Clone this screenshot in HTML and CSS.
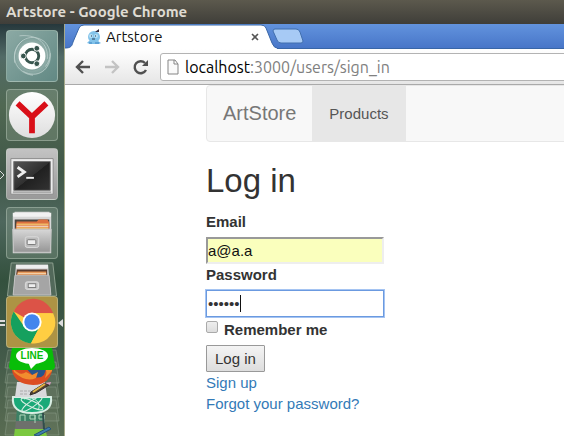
FILE: index.html
```html
<!DOCTYPE html>
<html lang="en">
<head>
<meta charset="utf-8">
<title>Artstore</title>
<link rel="stylesheet" href="styles.css">
</head>
<body>
<div class="desktop">
  <header class="titlebar">Artstore - Google Chrome</header>
  <div class="workspace">
    <nav class="launcher" aria-label="Launcher">
      <button class="tile tile-dash" aria-label="Dash">
        <svg viewBox="0 0 52 52">
          <defs><radialGradient id="dash"><stop offset="0" stop-color="#c5d4d1"/><stop offset="1" stop-color="#7b9d98"/></radialGradient></defs>
          <circle cx="26" cy="26" r="20" fill="url(#dash)"/>
          <g fill="none" stroke="#c0d2cf" stroke-width="1" opacity=".75">
            <path d="M8 33C5 11 24 0 39 11C46 18 47 28 40 37M16 10C0 24 9 44 27 46M45 23C46 41 31 50 17 42M13 5C33 3 43 14 42 29"/>
          </g>
          <circle cx="26" cy="27" r="14" fill="#60817c" opacity=".4"/>
          <circle cx="26" cy="26" r="14" fill="#fff"/>
          <circle cx="26" cy="26" r="7" fill="none" stroke="#38554e" stroke-width="3"/>
          <g fill="#38554e" stroke="#fff" stroke-width="1"><circle cx="17" cy="26" r="3"/><circle cx="31" cy="18" r="3"/><circle cx="31" cy="34" r="3"/></g>
        </svg>
      </button>
      <button class="tile" aria-label="Yandex">
        <svg viewBox="0 0 52 52">
          <defs><linearGradient id="disc" x2="0" y2="1"><stop stop-color="#fff"/><stop offset="1" stop-color="#dedede"/></linearGradient></defs>
          <circle cx="26" cy="26" r="24" fill="url(#disc)"/>
          <path d="M11 14L26 28V45M26 28L41 14" fill="none" stroke="#d90f18" stroke-width="6"/>
        </svg>
      </button>
      <button class="tile tile-terminal" aria-label="Terminal">
        <svg viewBox="0 0 52 52">
          <defs><linearGradient id="term" x2="1" y2="1"><stop stop-color="#555"/><stop offset=".5" stop-color="#303030"/><stop offset=".51" stop-color="#202020"/><stop offset="1" stop-color="#333"/></linearGradient></defs>
          <path d="M4 10H48V47H4z" fill="#ededed" stroke="#888"/>
          <path d="M6 44H46V46H6z" fill="#aaa"/>
          <path d="M7 13H45V43H7z" fill="url(#term)" stroke="#777"/>
          <path d="M11 19L18 24L11 29" fill="none" stroke="#eee" stroke-width="3"/>
          <path d="M20 30H28" stroke="#eee" stroke-width="2"/>
        </svg>
        <svg class="mark mark-left" viewBox="0 0 5 8"><path d="M0 0L4 4L0 8" fill="none" stroke="#ddd"/></svg>
      </button>
      <button class="tile" aria-label="Files">
        <svg viewBox="0 0 52 52">
          <defs><linearGradient id="metal" x2="0" y2="1"><stop stop-color="#d8d8d8"/><stop offset="1" stop-color="#959595"/></linearGradient></defs>
          <path d="M8 4H44L46 10V47H6V10z" fill="#d8d8d8"/>
          <path d="M6 5H46V9H6z" fill="#f2f2f2"/>
          <path d="M8 12H44V23H8z" fill="#4a4540"/>
          <path d="M10 14H31L33 12H42L44 15V22H9z" fill="#dc703f"/>
          <path d="M10 17H43M10 21H43" stroke="#efba69" stroke-width="2"/><path d="M10 19H43" stroke="#f7eee4"/>
          <path d="M6 22H46L45 46H7z" fill="url(#metal)" stroke="#c4c4c4"/>
          <rect x="19" y="30" width="14" height="11" rx="2" fill="#bcbcbc" stroke="#ddd"/><rect x="21" y="33" width="9" height="5" rx="1" fill="#eee" stroke="#777"/>
        </svg>
      </button>
      <button class="tile-folded" aria-label="Files window">
        <svg viewBox="0 0 52 36">
          <path d="M4 1H48L52 36H0z" fill="#52695a" stroke="#8ea190"/>
          <path d="M9 3H43L46 35H6z" fill="#c9c9c9"/><path d="M9 3H43V7H9z" fill="#eee"/>
          <path d="M10 8H42V15H9z" fill="#5a3b2d"/><path d="M11 10H41V14H10z" fill="#e6904d"/><path d="M11 12H41" stroke="#f7dfbc"/>
          <path d="M8 14H44L46 35H6z" fill="#a5a5a5" stroke="#c4c4c4"/>
          <rect x="19" y="21" width="14" height="8" rx="2" fill="#c8c8c8" stroke="#ddd"/><rect x="22" y="23" width="8" height="4" fill="#eee" stroke="#777"/>
        </svg>
      </button>
      <button class="tile tile-chrome" aria-label="Google Chrome">
        <svg viewBox="0 0 52 52">
          <circle cx="26" cy="26" r="22" fill="#ffce42"/>
          <path d="M26 26L7 15A22 22 0 0 1 48 17H26z" fill="#dc5347"/>
          <path d="M7 15A22 22 0 0 0 25 48L34 31L26 26L18 31z" fill="#15a05e"/>
          <path d="M26 17H48A22 22 0 0 1 25 48L34 31z" fill="#ffce42"/>
          <circle cx="26" cy="26" r="10" fill="#fff"/><circle cx="26" cy="26" r="8" fill="#4285ed"/>
        </svg>
        <svg class="mark mark-left" viewBox="0 0 5 8"><path d="M0 2H5M0 6H5" stroke="#ddd" stroke-width="2"/></svg>
        <svg class="mark mark-right" viewBox="0 0 5 8"><path d="M5 0V8L0 4z" fill="#ddd"/></svg>
      </button>
      <button class="stack" aria-label="More applications">
        <svg viewBox="0 0 64 88">
          <g fill="#a3b4a1" fill-opacity=".1" stroke="#a3b4a1" stroke-opacity=".35">
            <path d="M8 2H56L59 20H5z"/><path d="M8 14H56L59 35H5z"/><path d="M8 26H56L59 49H5z"/><path d="M8 39H56L59 60H5z"/><path d="M8 52H56L59 73H5z"/><path d="M8 65H56L59 87H5z"/>
          </g>
          <path d="M15 80H45L47 88H14z" fill="#7bc83f"/>
          <path d="M16 72H43L46 81H15z" fill="#6d706c"/>
          <path d="M17 60H42L44 73H16z" fill="#3c8065"/>
          <path d="M21 73V67H26V73M31 67H36V71H31V67M36 67V75M40 67H45V71H40V67M45 67V75" transform="translate(-1)" fill="none" stroke="#afd7bb"/>
          <path d="M13 49H51Q53 65 32 65Q11 65 13 49z" fill="#1aa978" stroke="#d9eee4" stroke-width="2"/>
          <g fill="none" stroke="#d9eee4"><ellipse cx="32" cy="56" rx="12" ry="3" transform="rotate(25 32 56)"/><ellipse cx="32" cy="56" rx="12" ry="3" transform="rotate(-35 32 56)"/><path d="M24 51C35 47 42 56 38 62"/></g>
          <path d="M17 34H45L47 49H15z" fill="#d9d9dc"/>
          <path d="M20 43H33M20 46H28" stroke="#aaa" stroke-dasharray="3 1"/>
          <path d="M12 16H53Q52 37 33 37Q14 36 12 22z" fill="#dc4d22"/>
          <path d="M24 18H46Q46 32 34 29z" fill="#28558c"/>
          <path d="M13 20Q20 29 26 24L32 27L38 24L36 30Q26 35 14 24zM44 20Q48 22 45 30L52 23V17z" fill="#f18d2e"/>
          <path d="M31 44L45 35L49 37L36 45L30 47z" fill="#534231" stroke="#342d29"/><path d="M33 44L45 36" stroke="#e0b444" stroke-width="2"/><path d="M45 35L51 34L50 37z" fill="#d99cc2"/>
          <path d="M12 0H52L55 18Q55 22 51 22H13Q9 22 9 18z" fill="#08bd08"/>
          <ellipse cx="32" cy="8" rx="16" ry="8" fill="#fff"/><path d="M28 14H38L31 21z" fill="#fff"/>
          <text x="32" y="11" text-anchor="middle" class="line-logo">LINE</text>
          <path d="M43 65L44 81" stroke="#304d4b" stroke-width="2"/>
          <path d="M34 87L49 79L51 81L38 88z" fill="#407dad" stroke="#255276"/>
        </svg>
      </button>
    </nav>
    <div class="browser">
      <div class="tabs">
        <div class="tab">
          <svg class="tab-shape" viewBox="0 0 212 25"><path d="M0 25V24C6 24 7 22 8 18L14 4Q15 1 19 1H196Q200 1 201 4L207 19Q209 24 212 24V25z" fill="#fff"/><path d="M0 24C6 24 7 22 8 18L14 4Q15 1 19 1H196Q200 1 201 4L207 19Q209 24 212 24" fill="none" stroke="#3966a7"/></svg>
          <svg class="favicon" viewBox="0 0 16 16"><path d="M3 12L1 14L4 15H13L15 14L12 12" fill="#79bde9"/><circle cx="8" cy="8" r="6" fill="#83c3ea"/><circle cx="5" cy="7" r="2" fill="#b8def4"/><circle cx="10" cy="7" r="2" fill="#b8def4"/><path d="M5 7H6M9 7H10M6 10H9" stroke="#243d57"/><path d="M9 3L13 0V3z" fill="#342a3d"/><path d="M3 14H6M9 14H13" stroke="#4387c1"/></svg>
          <span class="tab-title">Artstore</span>
          <button class="tab-close" aria-label="Close tab"><svg viewBox="0 0 8 8"><path d="M1 1L7 7M7 1L1 7" stroke="#555" stroke-width="1.6"/></svg></button>
        </div>
        <button class="new-tab" aria-label="New tab"><svg viewBox="0 0 32 16"><path d="M3 1H24Q27 1 28 4L31 13Q31 15 29 15H9Q6 15 5 12L1 3Q1 1 3 1z" fill="#a7caf5" stroke="#416fae"/></svg></button>
      </div>
      <div class="toolbar">
        <button class="tool" aria-label="Back"><svg viewBox="0 0 16 16"><path d="M15 8H3M8 2L2 8L8 14" fill="none" stroke="#505050" stroke-width="2.4"/></svg></button>
        <button class="tool" aria-label="Forward"><svg viewBox="0 0 16 16"><path d="M1 8H13M8 2L14 8L8 14" fill="none" stroke="#c3c3c3" stroke-width="2.4"/></svg></button>
        <button class="tool" aria-label="Reload"><svg viewBox="0 0 16 16"><path d="M12 4A6 6 0 1 0 13 11" fill="none" stroke="#505050" stroke-width="2.4"/><path d="M15 1V7H9z" fill="#505050"/></svg></button>
        <div class="address">
          <svg class="page-icon" viewBox="0 0 12 16"><path d="M1 1H8L11 5V15H1zM7 1V5H11" fill="#fafafa" stroke="#858585"/></svg>
          <span class="url"><span class="host">localhost</span>:3000/users/sign_in</span>
        </div>
      </div>
      <main class="page">
        <nav class="navbar">
          <a class="brand" href="#">ArtStore</a>
          <a class="nav-item" href="#">Products</a>
        </nav>
        <h1>Log in</h1>
        <form>
          <div class="field">
            <label for="email">Email</label>
            <input class="text email" id="email" type="email" value="a@a.a">
          </div>
          <div class="field">
            <label for="password">Password</label>
            <div class="password-box">
              <input class="text password" id="password" type="password" value="aaaaaa">
              <span class="caret"></span>
            </div>
          </div>
          <div class="remember">
            <input id="remember" type="checkbox">
            <label for="remember">Remember me</label>
          </div>
          <button class="submit" type="button">Log in</button>
        </form>
        <a class="link" href="#">Sign up</a>
        <a class="link" href="#">Forgot your password?</a>
      </main>
    </div>
  </div>
</div>
</body>
</html>
```
FILE: styles.css
```css
* { box-sizing: border-box; }
body { margin: 0; }
button { margin: 0; padding: 0; border: 0; background: none; }
svg { display: block; }

.desktop {
  display: flex;
  flex-direction: column;
  height: 100vh;
  overflow: hidden;
  background: #fff;
}
.titlebar {
  flex: none;
  height: 24px;
  padding-left: 6px;
  background: linear-gradient(#5c594d, #3f3e39);
  color: #dfdbd2;
  font: bold 15px/24px Ubuntu, "Noto Sans", sans-serif;
}
.workspace { display: flex; flex: 1; min-height: 0; }

.launcher {
  display: flex;
  flex: none;
  flex-direction: column;
  align-items: center;
  width: 65px;
  padding-top: 6px;
  overflow: hidden;
  border-right: 1px solid #a5a989;
  background: linear-gradient(#26383c, #526b67 8%, #506852 20%, #405748 36%, #4e675d 48%, #34513e 62%, #405848 78%, #596c52);
}
.tile {
  position: relative;
  flex: none;
  width: 52px;
  height: 52px;
  margin-bottom: 7px;
  border: 1px solid rgba(200, 215, 200, .4);
  border-radius: 4px;
  background: rgba(180, 200, 180, .22);
}
.tile > svg:first-child { width: 50px; height: 50px; }
.tile-dash { background: linear-gradient(135deg, #8ba9a4, #628984); }
.tile-terminal { background: linear-gradient(#c3c3c3, #999); }
.tile-folded { flex: none; width: 52px; margin-top: -4px; }
.tile-folded svg { width: 52px; height: 34px; }
.tile-chrome { margin-bottom: 0; background: #ad9344; }
.mark { position: absolute; top: 22px; width: 5px; height: 8px; }
.mark-left { left: -7px; }
.mark-right { right: -6px; }
.stack { flex: none; width: 64px; }
.stack svg { width: 64px; height: 88px; }
.line-logo { font: bold 10px "Liberation Sans", sans-serif; fill: #08bd08; }

.browser { flex: 1; min-width: 0; overflow: hidden; }
.tabs {
  display: flex;
  height: 25px;
  background: linear-gradient(#6293de, #4876c8);
  border-bottom: 1px solid #3966a7;
}
.tab {
  position: relative;
  display: flex;
  flex: none;
  align-items: center;
  width: 212px;
  height: 25px;
  padding: 0 18px 0 21px;
}
.tab-shape { position: absolute; inset: 0; width: 100%; height: 100%; }
.favicon { position: relative; width: 16px; height: 16px; }
.tab-title {
  position: relative;
  flex: 1;
  margin-left: 4px;
  color: #111;
  font: 15px/20px Ubuntu, "Noto Sans", sans-serif;
}
.tab-close { position: relative; }
.tab-close svg { width: 8px; height: 8px; }
.new-tab { position: relative; margin-left: -5px; }
.new-tab svg { width: 32px; height: 16px; }

.toolbar {
  display: flex;
  align-items: center;
  gap: 13px;
  height: 36px;
  padding-left: 10px;
  border-bottom: 1px solid #aaa;
  background: linear-gradient(#fff, #e6e6e6);
}
.tool svg { width: 16px; height: 16px; }
.address {
  display: flex;
  flex: 1;
  align-items: center;
  gap: 6px;
  height: 28px;
  margin: 0 -4px 0 -2px;
  padding-left: 6px;
  border: 1px solid #b3b3b3;
  border-radius: 3px;
  background: #fff;
}
.page-icon { width: 12px; height: 16px; }
.url { color: #808080; font: 16px/20px Ubuntu, "Noto Sans", sans-serif; }
.host { color: #000; }

.page {
  padding-left: 141px;
  color: #333;
  font: 15px/21px "Liberation Sans", Arial, sans-serif;
}
.navbar {
  display: flex;
  height: 57px;
  margin-right: -8px;
  border: 1px solid #e7e7e7;
  border-radius: 4px;
  background: #f8f8f8;
  line-height: 55px;
}
.brand { padding: 0 16px; color: #777; font-size: 20px; text-decoration: none; }
.nav-item { padding: 0 17px; background: #e7e7e7; color: #555; text-decoration: none; }
h1 { margin: 21px 0 12px; font-size: 33px; font-weight: 400; line-height: 36px; }
label { font-weight: 700; }
.field label { display: block; margin-bottom: 5px; }
.text {
  display: block;
  width: 178px;
  height: 27px;
  padding: 1px 0;
  border: 2px solid #eee;
  border-color: #999 #eee #eee #999;
  background: #fff;
  color: #111;
  font: inherit;
  outline: 0;
}
.email { background: #faffbd; }
.password-box { position: relative; width: 178px; }
.password { border: 1px solid #6b9ae0; padding: 1px; box-shadow: 0 0 0 1px #a5c4f2; color: #333; }
.caret { position: absolute; top: 5px; left: 34px; width: 1px; height: 17px; background: #111; }
.remember { display: flex; gap: 6px; height: 28px; padding-top: 2px; }
.remember input {
  width: 12px;
  height: 12px;
  margin: 2px 0;
  border: 1px solid #aaa;
  border-radius: 2px;
  background: linear-gradient(#eee, #ddd);
  appearance: none;
}
.submit {
  display: block;
  height: 27px;
  padding: 0 8px;
  border: 1px solid #999;
  border-radius: 1px;
  background: linear-gradient(#f4f4f4, #ddd);
  color: #333;
  font: inherit;
}
.link { display: block; width: fit-content; color: #337ab7; text-decoration: none; }
```
